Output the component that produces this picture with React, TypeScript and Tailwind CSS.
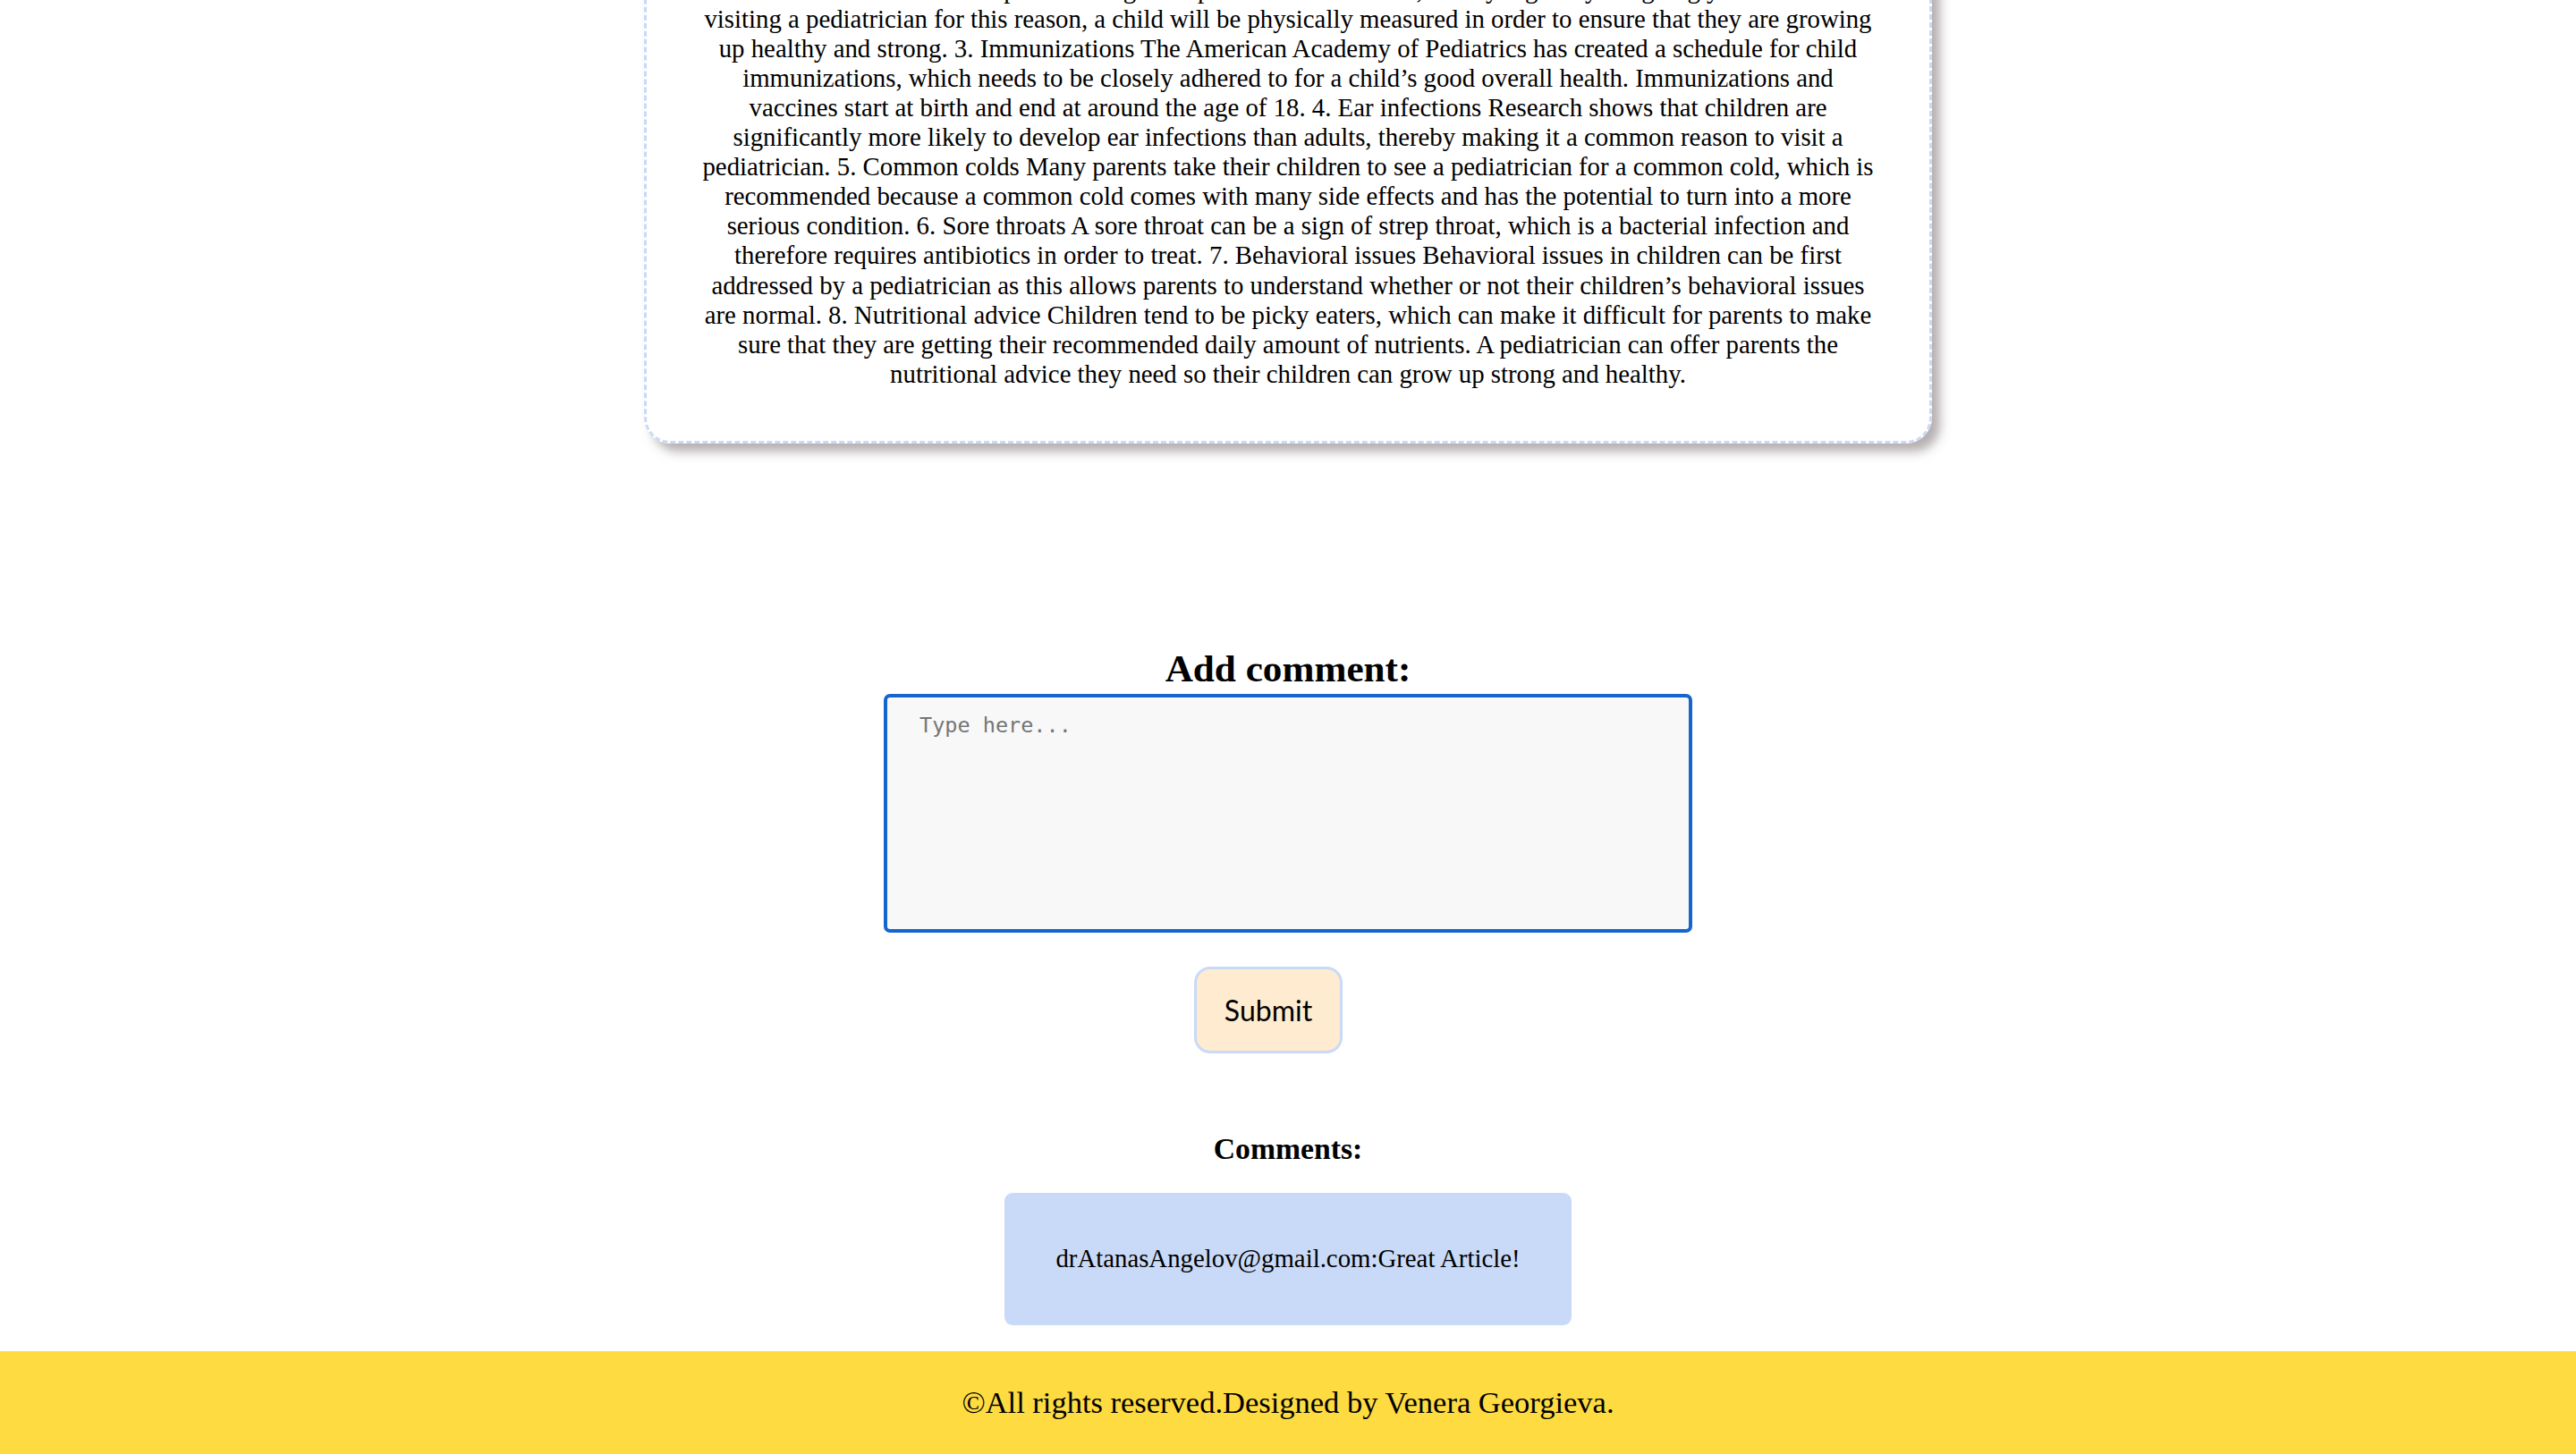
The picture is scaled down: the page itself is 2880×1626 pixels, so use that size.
import React, { useState } from 'react';

const article = [
  'visiting a pediatrician for this reason, a child will be physically measured in order to ensure that they are growing up healthy and strong.',
  '3. Immunizations The American Academy of Pediatrics has created a schedule for child immunizations, which needs to be closely adhered to for a child’s good overall health. Immunizations and vaccines start at birth and end at around the age of 18.',
  '4. Ear infections Research shows that children are significantly more likely to develop ear infections than adults, thereby making it a common reason to visit a pediatrician.',
  '5. Common colds Many parents take their children to see a pediatrician for a common cold, which is recommended because a common cold comes with many side effects and has the potential to turn into a more serious condition.',
  '6. Sore throats A sore throat can be a sign of strep throat, which is a bacterial infection and therefore requires antibiotics in order to treat.',
  '7. Behavioral issues Behavioral issues in children can be first addressed by a pediatrician as this allows parents to understand whether or not their children’s behavioral issues are normal.',
  '8. Nutritional advice Children tend to be picky eaters, which can make it difficult for parents to make sure that they are getting their recommended daily amount of nutrients. A pediatrician can offer parents the nutritional advice they need so their children can grow up strong and healthy.',
];

const comments = [{ author: 'drAtanasAngelov@gmail.com', text: 'Great Article!' }];

const App: React.FC = () => {
  const [comment, setComment] = useState('');

  return (
    <div className="h-[1626px] overflow-hidden flex flex-col items-center bg-white text-black font-['Liberation_Serif','Times_New_Roman',serif]">
      {/* article card, scrolled so its top is above the fold */}
      <section className="w-[1440px] mt-[-89px] rounded-[29px] border-[3.6px] border-dashed border-[#c9daf8] p-[57.6px] text-center text-[28.8px] leading-[33.1px] shadow-[9px_9px_12px_rgba(110,95,95,0.5)]">
        <p className="whitespace-nowrap overflow-hidden">
          Growth is one of the most important things that pediatricians monitor, and by regularly weighing your child when
        </p>
        <p>{article.join(' ')}</p>
      </section>

      <h2 className="mt-[227.5px] text-[43.2px] leading-[49.6px] font-bold">Add comment:</h2>
      <textarea
        autoFocus
        value={comment}
        onChange={(e) => setComment(e.target.value)}
        placeholder="Type here..."
        className="mt-[3px] w-[904px] h-[268px] resize-none rounded-[7px] border-[4px] border-[#1565cf] bg-[#f8f8f8] pt-[18px] px-[36px] text-[23.5px] leading-[27.4px] font-['DejaVu_Sans_Mono',monospace] outline-none caret-black placeholder:text-[#757575]"
      />
      <button className="mt-[38px] mr-[44px] w-[166px] h-[97px] rounded-[18px] border-[3.5px] border-[#c9daf8] bg-[#ffebd0] text-[32px] font-['Lato',sans-serif]">
        Submit
      </button>

      <h3 className="mt-[88px] text-[33.7px] leading-[38.7px] font-bold">Comments:</h3>
      {comments.map((c) => (
        <div key={c.author} className="mt-[29px] rounded-[9px] bg-[#c9daf8] p-[57.6px] text-[28.8px] leading-[33.1px]">
          {c.author}:{c.text}
        </div>
      ))}

      <footer className="mt-[29px] w-full h-[115px] shrink-0 flex items-center justify-center bg-[#ffdb42] text-[34.5px] leading-[39.7px]">
        ©All rights reserved.Designed by Venera Georgieva.
      </footer>
    </div>
  );
};

export default App;
